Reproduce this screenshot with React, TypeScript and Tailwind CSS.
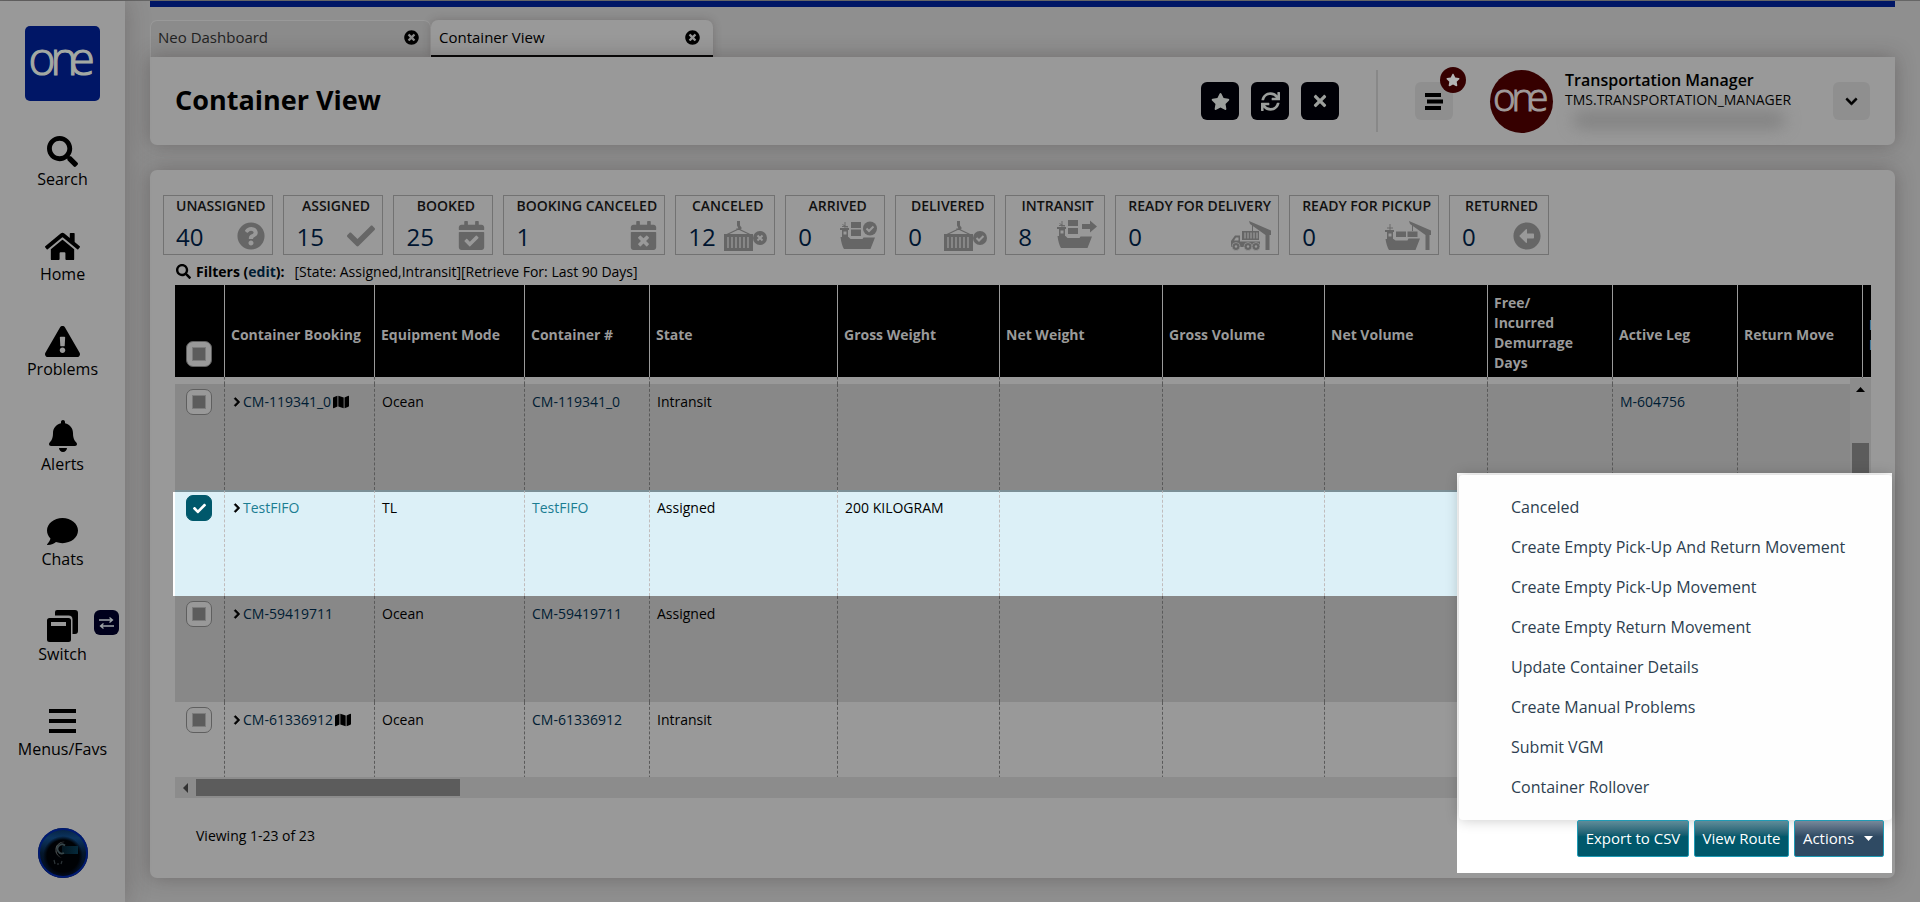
import React from "react";
import {
  FaArrowAltCircleLeft,
  FaBell,
  FaCalendarCheck,
  FaCalendarTimes,
  FaCheck,
  FaChevronDown,
  FaChevronRight,
  FaComment,
  FaExclamationTriangle,
  FaHome,
  FaMap,
  FaQuestionCircle,
  FaSearch,
  FaStar,
  FaSync,
  FaTimes,
  FaTimesCircle,
} from "react-icons/fa";

/* ---------- drawings ---------- */

function OneMark({ className }: { className: string }) {
  return (
    <svg viewBox="0 0 75 75" className={className} role="img" aria-label="one">
      <text x="3.500 25.500 44.500" y="49" fontSize="46" fontFamily="'Open Sans', sans-serif" fontWeight="300" fill="currentColor" stroke="currentColor" strokeWidth="1.200">
        one
      </text>
    </svg>
  );
}

function SwitchIcon() {
  return (
    <svg width="31" height="32" viewBox="0 0 31 32">
      <path d="M10 0h18a3 3 0 0 1 3 3v18a3 3 0 0 1-3 3h-2.500V9.500A4 4 0 0 0 21.500 5.500H8V2a2 2 0 0 1 2-2z" />
      <path fillRule="evenodd" d="M2.500 8h19A2.500 2.500 0 0 1 24 10.500v19a2.500 2.500 0 0 1-2.500 2.500h-19A2.500 2.500 0 0 1 0 29.500v-19A2.500 2.500 0 0 1 2.500 8zM4 12v4h15v-4z" />
    </svg>
  );
}

function BarsIcon() {
  return (
    <svg width="27" height="24" viewBox="0 0 27 24">
      <path d="M0 0h27v4H0zM0 10h27v4H0zM0 20h27v4H0z" />
    </svg>
  );
}

function SwapIcon() {
  return (
    <svg width="15" height="12" viewBox="0 0 15 12" fill="none" stroke="currentColor" strokeWidth="1.300">
      <path d="M0 3h13.500M10.500 0.500L13.500 3l-3 2.500M15 9H1.500M4.500 6.500L1.500 9l3 2.500" />
    </svg>
  );
}

function UnevenBarsIcon() {
  return (
    <svg width="18" height="17" viewBox="0 0 18 17">
      <path d="M0 0h16v4H0zM2 6.500h16v4H2zM0 13h16v4H0z" />
    </svg>
  );
}

function MoonAvatar() {
  return (
    <svg width="50" height="50" viewBox="0 0 50 50" role="img" aria-label="Profile">
      <defs>
        <linearGradient id="ring" x1="0" y1="0" x2="0" y2="1">
          <stop offset="0" stopColor="#06203f" />
          <stop offset="0.2" stopColor="#0c3560" />
          <stop offset="0.5" stopColor="#04172c" />
          <stop offset="1" stopColor="#01091c" />
        </linearGradient>
        <radialGradient id="core" cx="0.5" cy="0.5" r="0.5">
          <stop offset="0.8" stopColor="#000205" />
          <stop offset="1" stopColor="#000205" stopOpacity="0" />
        </radialGradient>
        <linearGradient id="glow" x1="0" y1="0" x2="1" y2="0">
          <stop offset="0" stopColor="#04161f" />
          <stop offset="1" stopColor="#052a3c" />
        </linearGradient>
      </defs>
      <circle cx="25" cy="25" r="25" fill="url(#ring)" />
      <circle cx="25" cy="25" r="24" fill="none" stroke="#001a70" strokeWidth="2" />
      <circle cx="25" cy="28" r="20" fill="url(#core)" />
      <rect x="24" y="18" width="16" height="8" fill="url(#glow)" />
      <path d="M27 14a8 8 0 1 0-3 16a9 9 0 0 1-5.500-8a8 8 0 0 1 8.500-8z" fill="#4a4f50" />
      <path d="M27 17.500a4.500 4.500 0 1 0-1 7.500" fill="none" stroke="#37464a" strokeWidth="1.800" />
      <path d="M16 32l1 4M20 35v2M24 33l-1 3" stroke="#2c3438" strokeWidth="1.200" />
    </svg>
  );
}

const KNOCKOUT = "#999999";

function HangingContainer({ mark }: { mark: "check" | "cross" }) {
  return (
    <svg width="43" height="30" viewBox="0 0 43 30" fill="currentColor">
      <path d="M13 0h3v4.500l1.500 2a2 2 0 0 1-2 2.500h-2a2 2 0 0 1-1.500-1.500h2.500L13 4.500z" />
      <path d="M14.500 8L3 13.500M14.500 8L26 13.500" stroke="currentColor" strokeWidth="1.200" fill="none" />
      <path d="M0 13h29v17H0z" />
      <path d="M4 16v11M8 16v11M12 16v11M16 16v11M20 16v11M24 16v11" stroke={KNOCKOUT} strokeWidth="1.300" />
      <circle cx="36" cy="17" r="7" />
      {mark === "cross" ? (
        <path d="M33.500 14.500l5 5M38.500 14.500l-5 5" stroke={KNOCKOUT} strokeWidth="2" />
      ) : (
        <path d="M32.500 17l2.500 2.500 4.500-4.500" stroke={KNOCKOUT} strokeWidth="2" fill="none" />
      )}
    </svg>
  );
}

function ShipBody() {
  return (
    <>
      <path d="M5 1v6M2 5.500h6M2.500 3.500l5 3" stroke="currentColor" strokeWidth="0.900" />
      <path d="M0 7h9v2H8v8H2V9H0z" />
      <path d="M3.500 10.500h3v3h-3z" fill={KNOCKOUT} />
      <path d="M0.500 16h8l2 2h12l1-1.500h11.500L30.500 28H4Q1.500 24 0.500 16z" />
    </>
  );
}

function ArrivedShip() {
  return (
    <svg width="37" height="30" viewBox="0 0 37 30" fill="currentColor">
      <ShipBody />
      <path d="M11 1h10v6H11zM11 8.500h10V15H11z" />
      <circle cx="30" cy="7.500" r="7" />
      <path d="M26.500 7.500L29 10l4.500-4.500" stroke={KNOCKOUT} strokeWidth="2" fill="none" />
    </svg>
  );
}

function TransitShip() {
  return (
    <svg width="40" height="32" viewBox="0 0 40 32" fill="currentColor">
      <ShipBody />
      <path d="M11 0h10v6H11zM11 8h10v6H11z" />
      <path d="M25 4h8V0.500L40 6.500l-7 6V9h-8z" />
    </svg>
  );
}

function TruckCrane() {
  return (
    <svg width="40" height="30" viewBox="0 0 40 30" fill="currentColor">
      <path d="M18 0l22 9.500V14h-1.500v15h-4V14L19 3z" />
      <path d="M21.500 2v8" stroke="currentColor" strokeWidth="1" />
      <path d="M11 10h17v9H11z" />
      <path d="M14 11.500v6M17 11.500v6M20 11.500v6M23 11.500v6M26 11.500v6" stroke={KNOCKOUT} strokeWidth="1.200" />
      <path d="M0 26v-6l4-5.500h5V20.500h20V26z" />
      <path d="M3 19.500l2-3h2.500v3z" fill={KNOCKOUT} />
      <g stroke={KNOCKOUT} strokeWidth="0.700">
        <circle cx="5" cy="25.500" r="4" />
        <circle cx="17" cy="25.500" r="4" />
        <circle cx="25" cy="25.500" r="4" />
      </g>
      <g fill={KNOCKOUT}>
        <circle cx="5" cy="25.500" r="1.200" />
        <circle cx="17" cy="25.500" r="1.200" />
        <circle cx="25" cy="25.500" r="1.200" />
      </g>
    </svg>
  );
}

function ShipCrane() {
  return (
    <svg width="46" height="30" viewBox="0 0 46 30" fill="currentColor">
      <path d="M24 0l22 9.500V14h-1.500v15h-4V14L25 3z" />
      <path d="M27.500 2v8" stroke="currentColor" strokeWidth="1" />
      <path d="M11 10.500h10V16H11zM22.500 10.500h10V16h-10z" />
      <path d="M5 3v6M2 7h6" stroke="currentColor" strokeWidth="0.900" />
      <path d="M0 9h9v2H8v8H2v-8H0z" />
      <path d="M3.500 12.500h3v3h-3z" fill={KNOCKOUT} />
      <path d="M0.500 18h8l2 1.500h12l1-2h11.500L30.500 29H4Q1.500 25 0.500 18z" />
    </svg>
  );
}

/* ---------- data ---------- */

const navItems = [
  { label: "Search", icon: <FaSearch size={31} /> },
  { label: "Home", icon: <FaHome size={35} /> },
  { label: "Problems", icon: <FaExclamationTriangle size={35} /> },
  { label: "Alerts", icon: <FaBell size={32} /> },
  { label: "Chats", icon: <FaComment size={31} /> },
  { label: "Switch", icon: <SwitchIcon /> },
  { label: "Menus/Favs", icon: <BarsIcon /> },
];

const stats = [
  { label: "UNASSIGNED", value: 40, icon: <FaQuestionCircle size={28} /> },
  { label: "ASSIGNED", value: 15, icon: <FaCheck size={28} /> },
  { label: "BOOKED", value: 25, icon: <FaCalendarCheck size={29} className="-mx-px" /> },
  { label: "BOOKING CANCELED", value: 1, icon: <FaCalendarTimes size={29} className="-mx-px" /> },
  { label: "CANCELED", value: 12, icon: <HangingContainer mark="cross" /> },
  { label: "ARRIVED", value: 0, icon: <ArrivedShip /> },
  { label: "DELIVERED", value: 0, icon: <HangingContainer mark="check" /> },
  { label: "INTRANSIT", value: 8, icon: <TransitShip /> },
  { label: "READY FOR DELIVERY", value: 0, icon: <TruckCrane /> },
  { label: "READY FOR PICKUP", value: 0, icon: <ShipCrane /> },
  { label: "RETURNED", value: 0, icon: <FaArrowAltCircleLeft size={28} /> },
];

const oneLine = "pt-[7px] pr-0 whitespace-nowrap";
const wrapped = "pt-[3px] pr-8";

const columns = [
  { label: "Container Booking", width: "w-[150px]", text: oneLine },
  { label: "Equipment Mode", width: "w-[150px]", text: oneLine },
  { label: "Container #", width: "w-[125px]", text: oneLine },
  { label: "State", width: "w-[188px]", text: oneLine },
  { label: "Gross Weight", width: "w-[162px]", text: oneLine },
  { label: "Net Weight", width: "w-[163px]", text: oneLine },
  { label: "Gross Volume", width: "w-[162px]", text: oneLine },
  { label: "Net Volume", width: "w-[163px]", text: oneLine },
  { label: "Free/ Incurred Demurrage Days", width: "w-[125px]", text: wrapped },
  { label: "Active Leg", width: "w-[125px]", text: oneLine },
  { label: "Return Move", width: "w-[125px]", text: oneLine },
  { label: "Pickup Move", width: "w-[125px]", text: "pt-[7px] pr-14" },
];

const rows = [
  { booking: "CM-119341_0", map: true, mode: "Ocean", state: "Intransit", weight: "", leg: "M-604756", selected: false },
  { booking: "TestFIFO", map: false, mode: "TL", state: "Assigned", weight: "200 KILOGRAM", leg: "", selected: true },
  { booking: "CM-59419711", map: false, mode: "Ocean", state: "Assigned", weight: "", leg: "", selected: false },
  { booking: "CM-61336912", map: true, mode: "Ocean", state: "Intransit", weight: "", leg: "", selected: false },
];

const actions = [
  "Canceled",
  "Create Empty Pick-Up And Return Movement",
  "Create Empty Pick-Up Movement",
  "Create Empty Return Movement",
  "Update Container Details",
  "Create Manual Problems",
  "Submit VGM",
  "Container Rollover",
];

/* ---------- pieces ---------- */

function Tick({ label, checked = false }: { label: string; checked?: boolean }) {
  return (
    <label className="relative block size-[26px]">
      <input
        type="checkbox"
        defaultChecked={checked}
        aria-label={label}
        className="peer block size-[26px] appearance-none rounded-[7px] border border-[#5f5f5f] bg-[#999999] checked:border-[#00586b] checked:bg-[#00586b]"
      />
      <span className="pointer-events-none absolute inset-[6px] border border-[#7c7c7c] bg-[#5c5c5c] peer-checked:hidden" />
      <FaCheck size={13} className="pointer-events-none absolute inset-0 m-auto hidden text-white peer-checked:block" />
    </label>
  );
}

function Sidebar() {
  return (
    <nav className="relative z-10 flex w-[125px] shrink-0 flex-col items-center bg-[#999999] pt-[25px] pb-6 shadow-[0_0_24px_rgba(50,40,40,0.3)]">
      <a href="#home" className="block size-[75px] rounded-[5px] bg-[#001666] text-[#a3a9a3]">
        <OneMark className="block size-[75px]" />
      </a>
      <ul className="mt-[34px] flex w-full flex-col gap-[39px]">
        {navItems.map((item) => (
          <li key={item.label} className="relative">
            <button type="button" className="flex w-full flex-col items-center text-base leading-6 text-black">
              <span className="flex h-8 items-center">{item.icon}</span>
              {item.label}
            </button>
            {item.label === "Switch" && (
              <span className="absolute top-0 right-[6px] flex size-[25px] items-center justify-center rounded-[6px] bg-[#00001c] text-[#a0a5a8]">
                <SwapIcon />
              </span>
            )}
          </li>
        ))}
      </ul>
      <button type="button" aria-label="Profile" className="mt-auto">
        <MoonAvatar />
      </button>
    </nav>
  );
}

function Tabs() {
  return (
    <div className="mt-[13px] flex h-[37px] text-[15px]">
      <div className="flex w-[281px] items-center justify-between rounded-t-[7px] border border-b-0 border-[#999999] bg-[#8b8b8b] pr-[11px] pb-[3px] pl-[7px] text-[#222222]">
        <a href="#neo">Neo Dashboard</a>
        <button type="button" aria-label="Close Neo Dashboard">
          <FaTimesCircle size={15} className="block text-black" />
        </button>
      </div>
      <div className="flex w-[282px] items-center justify-between rounded-t-[7px] border-b-2 border-black bg-[#999999] pr-[13px] pl-2 text-black shadow-[0_0_8px_rgba(50,40,40,0.25)]">
        <a href="#container">Container View</a>
        <button type="button" aria-label="Close Container View">
          <FaTimesCircle size={15} className="block" />
        </button>
      </div>
    </div>
  );
}

function PageHeader() {
  const button = "flex size-[38px] items-center justify-center rounded-[6px] bg-[#000006] text-[#9c9f9c]";
  return (
    <header className="relative flex h-[88px] shrink-0 items-center rounded-b-[7px] bg-[#999999] px-[25px] shadow-[0_0_20px_rgba(50,40,40,0.35)]">
      <h1 className="mr-auto pb-[2px] text-[27px] font-bold text-black">Container View</h1>
      <div className="flex gap-3">
        <button type="button" aria-label="Favorite" className={button}>
          <FaStar size={19} />
        </button>
        <button type="button" aria-label="Refresh" className={button}>
          <FaSync size={19} />
        </button>
        <button type="button" aria-label="Close" className={button}>
          <FaTimes size={18} />
        </button>
      </div>
      <div className="mx-[37px] h-[62px] w-[2px] bg-[#888888]" />
      <button type="button" aria-label="Menu" className="relative flex size-[38px] items-center justify-center rounded-[6px] bg-[#8f8f8f] text-black">
        <UnevenBarsIcon />
        <span className="absolute -top-[15px] -right-[13px] flex size-[26px] items-center justify-center rounded-full bg-[#360000] text-[#b4b4b4]">
          <FaStar size={14} />
        </span>
      </button>
      <div className="ml-[37px] size-[63px] rounded-full bg-[#360000] text-[#a09a9a]">
        <OneMark className="block size-[63px]" />
      </div>
      <div className="ml-3 flex h-[62px] w-[268px] flex-col text-[15px] leading-5 text-black">
        <span className="text-[16px] font-semibold">Transportation Manager</span>
        <span className="text-[14px]">TMS.TRANSPORTATION_MANAGER</span>
        <span className="mt-[2px] ml-2 h-4 w-[212px] shrink-0 rounded-full bg-[#707070]/60 blur-[8px]" />
      </div>
      <button type="button" aria-label="Open profile menu" className="flex h-[38px] w-[37px] items-center justify-center rounded-[6px] bg-[#8f8f8f] text-black">
        <FaChevronDown size={13} stroke="currentColor" strokeWidth={30} />
      </button>
    </header>
  );
}

function Stats() {
  return (
    <ul className="flex gap-[10px] pr-3 pl-[13px]">
      {stats.map((s) => (
        <li key={s.label} className="flex h-[60px] min-w-[100px] flex-col border border-[#727272] pr-[7px] pl-3">
          <span className="text-center text-[14px] leading-5 font-semibold whitespace-nowrap text-[#111111]">{s.label}</span>
          <span className="flex h-[38px] items-center justify-between">
            <a href="#filter" className="pt-1 text-2xl leading-8 text-[#001530]">
              {s.value}
            </a>
            <span className="pt-px text-[#666666]">{s.icon}</span>
          </span>
        </li>
      ))}
    </ul>
  );
}

function Grid() {
  return (
    <div className="relative min-h-0 flex-1 overflow-hidden">
      <table className="w-[1813px] table-fixed border-separate border-spacing-0 text-left text-[14px]">
        <thead>
          <tr className="h-[92px] bg-black text-[#9a9a9a]">
            <th className="w-[50px] border-r border-[#9a9a9a] pb-[10px] pl-[11px] align-bottom">
              <Tick label="Select all rows" />
            </th>
            {columns.map((c) => (
              <th key={c.label} className={"border-r border-[#9a9a9a] pb-0 pl-[6px] leading-5 font-bold " + c.width + " " + c.text}>
                {c.label}
              </th>
            ))}
          </tr>
        </thead>
        <tbody>
          <tr className="h-[7px]">
            <td className="border-r border-dashed border-[#5a5a5a] p-0" />
            {columns.map((c) => (
              <td key={c.label} className="border-r border-dashed border-[#5a5a5a] p-0" />
            ))}
          </tr>
          {rows.map((r, i) => {
            const tone = r.selected ? "bg-[#dcf0f7]" : i % 2 === 0 ? "bg-[#888888]" : "bg-[#999999]";
            const cell = r.selected
              ? "border-r border-dashed border-r-[#c0bcbc] border-t-2 border-t-[#7b8f96] [border-top-style:solid] pl-[7px] pt-[5px] align-top"
              : "border-r border-dashed border-[#5a5a5a] pl-[7px] pt-[7px] align-top";
            const link = r.selected ? "text-[#1b7d92]" : "text-[#001c33]";
            const tickCell = r.selected
              ? "border-r border-dashed border-r-[#c0bcbc] border-t-2 border-t-[#7b8f96] [border-top-style:solid] pl-[11px] pt-[3px] align-top"
              : "border-r border-dashed border-[#5a5a5a] pl-[11px] pt-[5px] align-top";
            return (
              <tr key={r.booking} className={"h-[106px] leading-[21px] text-black " + tone}>
                <td className={tickCell}>
                  <Tick label={"Select " + r.booking} checked={r.selected} />
                </td>
                <td className={cell}>
                  <span className="flex items-center">
                    <button type="button" aria-label={"Expand " + r.booking}>
                      <FaChevronRight size={10} className="mr-px block" stroke="currentColor" strokeWidth={40} />
                    </button>
                    <a href="#booking" className={link}>
                      {r.booking}
                    </a>
                    {r.map && <FaMap size={16} className="ml-[2px]" />}
                  </span>
                </td>
                <td className={cell}>{r.mode}</td>
                <td className={cell}>
                  <a href="#container" className={link}>
                    {r.booking}
                  </a>
                </td>
                <td className={cell}>{r.state}</td>
                <td className={cell}>{r.weight}</td>
                <td className={cell} />
                <td className={cell} />
                <td className={cell} />
                <td className={cell} />
                <td className={cell}>
                  <a href="#leg" className={link}>
                    {r.leg}
                  </a>
                </td>
                <td className={cell} />
                <td className={cell} />
              </tr>
            );
          })}
        </tbody>
      </table>
      <div className="absolute top-[93px] right-0 bottom-0 flex w-[21px] flex-col items-center bg-[#8c8c8c]">
        <svg width="9" height="5" viewBox="0 0 9 5" className="mt-[9px]">
          <path d="M0 5L4.500 0L9 5z" />
        </svg>
        <div className="mt-[51px] h-[72px] w-[17px] bg-[#5c5c5c]" />
      </div>
    </div>
  );
}

function ActionPanel() {
  const button =
    "h-[37px] rounded-[2px] border border-[#1f9bb5] bg-linear-to-b from-[#5f8c99] from-0% via-[#00586b] via-45% to-[#00586b] text-[15px] text-white";
  return (
    <div className="absolute right-[3px] bottom-[5px] w-[435px] bg-white pt-[2px] pl-[2px]">
      <ul className="rounded-[4px] bg-[#fefefe] pt-3 pb-[13px] shadow-[0_0_14px_rgba(0,0,0,0.22)]">
        {actions.map((a) => (
          <li key={a}>
            <button type="button" className="block h-10 w-full pl-[52px] text-left text-base text-[#2d3e50]">
              {a}
            </button>
          </li>
        ))}
      </ul>
      <div className="relative flex justify-end gap-[5px] pr-2 pb-4">
        <button type="button" className={button + " w-[112px]"}>
          Export to CSV
        </button>
        <button type="button" className={button + " w-[95px]"}>
          View Route
        </button>
        <button
          type="button"
          className="flex h-[37px] w-[90px] items-center justify-center gap-[10px] rounded-[2px] border border-[#1f9bb5] bg-linear-to-b from-[#77889a] from-0% via-[#2f4a63] via-45% to-[#2f4a63] pr-[2px] text-[15px] text-white"
        >
          Actions
          <svg width="9" height="5" viewBox="0 0 9 5" fill="currentColor">
            <path d="M0 0h9L4.500 5z" />
          </svg>
        </button>
      </div>
    </div>
  );
}

export default function App() {
  return (
    <div className="flex h-screen min-h-[760px] border-t border-[#666666] bg-[#8f8f8f] font-['Open_Sans','Noto_Sans',sans-serif]">
      <Sidebar />
      <main className="flex min-w-0 flex-1 flex-col px-[25px] pb-6">
        <div className="h-[6px] shrink-0 bg-[#001666]" />
        <Tabs />
        <PageHeader />
        <section className="relative mt-[25px] flex min-h-0 flex-1 flex-col rounded-[7px] bg-[#999999] pt-[25px] shadow-[0_0_20px_rgba(50,40,40,0.35)]">
          <Stats />
          <div className="flex h-[30px] items-center pt-[3px] pl-[26px] text-[14px] text-black">
            <FaSearch size={15} />
            <span className="ml-[5px] font-bold">
              Filters (
              <a href="#edit" className="text-[#001c33]">
                edit
              </a>
              ):
            </span>
            <span className="ml-[10px]">[State: Assigned,Intransit][Retrieve For: Last 90 Days]</span>
          </div>
          <div className="relative mr-6 ml-[25px] flex min-h-0 flex-1 flex-col">
            <Grid />
            <div className="absolute top-[207px] -left-[2px] h-[104px] w-[2px] bg-white" />
            <div className="flex h-[21px] shrink-0 items-center bg-[#8c8c8c] pl-2">
              <svg width="5" height="10" viewBox="0 0 5 10" fill="#333333">
                <path d="M5 0v10L0 5z" />
              </svg>
              <div className="ml-2 h-[17px] w-[264px] bg-[#5c5c5c]" />
            </div>
          </div>
          <p className="h-20 shrink-0 pt-[27px] pl-[46px] text-[14px] leading-[21px] text-black">Viewing 1-23 of 23</p>
          <ActionPanel />
        </section>
      </main>
    </div>
  );
}
